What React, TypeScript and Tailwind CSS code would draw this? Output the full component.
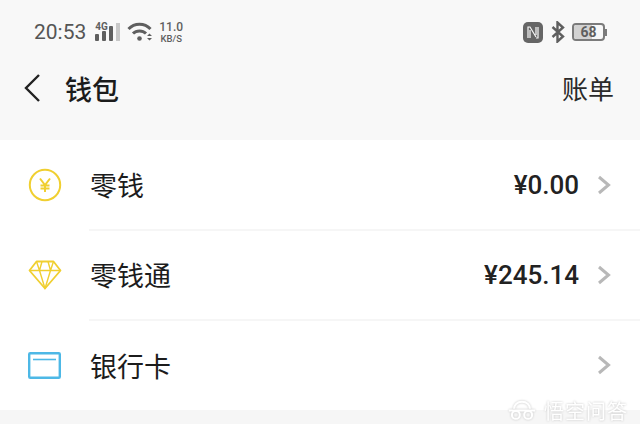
import React from 'react';

const CJK = 'font-["Noto_Sans_CJK_SC","Noto_Sans",sans-serif]';

const Chevron = () => (
  <svg width="14" height="20" viewBox="0 0 14 20" fill="none" stroke="#b8b8b8" strokeWidth="3">
    <path d="M2 2 L11.5 10 L2 18" />
  </svg>
);

const CoinIcon = () => (
  <svg width="34" height="34" viewBox="0 0 34 34" fill="none" stroke="#f0cf30">
    <circle cx="17" cy="17" r="15.2" strokeWidth="2" />
    <path d="M12 10.5 L17 17 L22 10.5 M17 17 V24 M12.5 17.5 H21.5 M12.5 20.5 H21.5" strokeWidth="2" />
  </svg>
);

const DiamondIcon = () => (
  <svg width="34" height="30" viewBox="0 0 34 30" fill="none" stroke="#f0cf30" strokeWidth="1.8" strokeLinejoin="round">
    <path d="M8.5 1.5 H25.5 L32.5 10.5 L17 28.5 L1.5 10.5 Z" />
    <path d="M1.5 10.5 H32.5 M8.5 1.5 L11.5 10.5 L17 28.5 L22.5 10.5 L25.5 1.5 M11.5 10.5 L14 1.5 M22.5 10.5 L20 1.5" strokeWidth="1.4" />
  </svg>
);

const CardIcon = () => (
  <svg width="33" height="27" viewBox="0 0 33 27" fill="none" stroke="#4db8e6">
    <rect x="1.2" y="1.2" width="30.6" height="24.6" rx="1" strokeWidth="2.4" />
    <path d="M5 7.5 H28" strokeWidth="1.6" />
  </svg>
);

const SignalIcon = () => (
  <svg width="25" height="18" viewBox="0 0 25 18" fill="#5f5f5f">
    <rect x="0" y="11" width="4" height="7" rx="1" />
    <rect x="7" y="8" width="4" height="10" rx="1" />
    <rect x="14" y="3" width="4" height="15" rx="1" />
    <rect x="21" y="0" width="4" height="18" fill="#c8c8c8" />
  </svg>
);

const WifiIcon = () => (
  <svg width="26" height="20" viewBox="0 0 26 20" fill="none" stroke="#5f5f5f" strokeWidth="3">
    <path d="M1.5 7 C7.5 0.5 17.5 0.5 23.5 7" />
    <path d="M6 11.5 C9.5 8 15.5 8 19 11.5" />
    <circle cx="12.5" cy="16.5" r="2.3" fill="#5f5f5f" stroke="none" />
    <path d="M20 14 L22.5 11.5 L25 14 Z M20 16 L22.5 18.5 L25 16 Z" fill="#5f5f5f" stroke="none" />
  </svg>
);

const NfcIcon = () => (
  <svg width="20" height="21" viewBox="0 0 20 21">
    <rect width="20" height="21" rx="5" fill="#666666" />
    <path d="M5 16 V5 H7 L13 15 M7 16 V8 M13 5 V13 M13 16 H15 V5" fill="none" stroke="#f8f8f8" strokeWidth="1.2" />
  </svg>
);

const BluetoothIcon = () => (
  <svg width="14" height="22" viewBox="0 0 14 22" fill="none" stroke="#5f5f5f" strokeWidth="2.4">
    <path d="M1.5 6 L12 15.5 L6.5 20.5 V1.5 L12 6.5 L1.5 16" />
  </svg>
);

const Battery = () => (
  <div className="flex items-center">
    <div className="relative flex h-[18px] w-[33px] items-center justify-center overflow-hidden rounded-[4px] border-2 border-[#7b7b7b]">
      <div className="absolute inset-y-0 left-0 w-[18px] bg-[#d2d2d2]" />
      <span className="relative font-['Roboto',sans-serif] text-[14px] font-bold leading-none text-[#5f5f5f]">68</span>
    </div>
    <div className="h-[7px] w-[2px] bg-[#7b7b7b]" />
  </div>
);

interface RowProps {
  icon: React.ReactNode;
  label: string;
  amount?: string;
  divider?: boolean;
}

const Row = ({ icon, label, amount, divider }: RowProps) => (
  <div className="flex h-[90px] bg-white">
    <div className="flex w-[89px] shrink-0 items-center pl-[28px]">{icon}</div>
    <div className={`flex flex-1 items-center pr-[29px] ${divider ? 'mb-[-1px] border-b-2 border-[#f6f6f6]' : ''}`}>
      <span className={`${CJK} ml-[1px] flex-1 text-[27px] leading-none text-[#1c1c1c]`}>{label}</span>
      {amount && (
        <span className="mr-[18px] font-['Roboto',sans-serif] text-[26px] font-medium leading-none text-[#222222]">{amount}</span>
      )}
      <Chevron />
    </div>
  </div>
);

export default function App() {
  return (
    <div className="relative h-[434px] w-[640px] overflow-hidden bg-white">
      {/* Status + title bar */}
      <div className="flex h-[140px] flex-col bg-[#f8f8f8]">
        <div className="flex h-[64px] items-center pl-[34px] pr-[33px]">
          <span className="font-['Roboto',sans-serif] text-[21px] leading-none text-[#555555]">20:53</span>
          <div className="relative ml-[9px] flex h-[18px] w-[25px] items-end">
            <SignalIcon />
            <span className="absolute left-0 top-[-1px] font-['Roboto',sans-serif] text-[10px] font-bold leading-none text-[#5f5f5f]">4G</span>
          </div>
          <div className="ml-[7px]"><WifiIcon /></div>
          <div className="ml-[6px] flex flex-col items-center gap-[1px] font-['Roboto',sans-serif] font-medium text-[#5f5f5f]">
            <span className="text-[12px] leading-[11px]">11.0</span>
            <span className="text-[9.5px] leading-[9px]">KB/S</span>
          </div>
          <div className="ml-auto flex items-center gap-[8px]">
            <NfcIcon />
            <BluetoothIcon />
            <div className="ml-[-1px]"><Battery /></div>
          </div>
        </div>
        <div className="mt-[-1px] flex h-[50px] items-center pl-[24px] pr-[26px]">
          <svg width="16" height="28" viewBox="0 0 16 28" fill="none" stroke="#222222" strokeWidth="2.4">
            <path d="M15 1 L2 14 L15 27" />
          </svg>
          <span className={`${CJK} ml-[25px] flex-1 text-[27px] font-medium leading-none text-[#1c1c1c]`}>钱包</span>
          <span className={`${CJK} text-[26px] leading-none text-[#2a2a2a]`}>账单</span>
        </div>
      </div>

      <Row icon={<CoinIcon />} label="零钱" amount="¥0.00" divider />
      <Row icon={<DiamondIcon />} label="零钱通" amount="¥245.14" divider />
      <Row icon={<CardIcon />} label="银行卡" />
      <div className="h-[14px] bg-[#f6f6f6]" />

      {/* Watermark */}
      <div className="absolute right-[12px] top-[400px] flex items-center gap-[8px] text-white drop-shadow-[0_0_1px_#c4c4c4]">
        <svg width="28" height="21" viewBox="0 0 32 24" fill="none" stroke="#ffffff" strokeWidth="2.4">
          <path d="M16 2 C10 2 7 6 7 10 M16 2 C22 2 25 6 25 10" />
          <path d="M1 12 H31" />
          <circle cx="9" cy="17" r="4.5" />
          <circle cx="23" cy="17" r="4.5" />
        </svg>
        <span className={`${CJK} text-[20px] leading-none tracking-[1px]`}>悟空问答</span>
      </div>
    </div>
  );
}
